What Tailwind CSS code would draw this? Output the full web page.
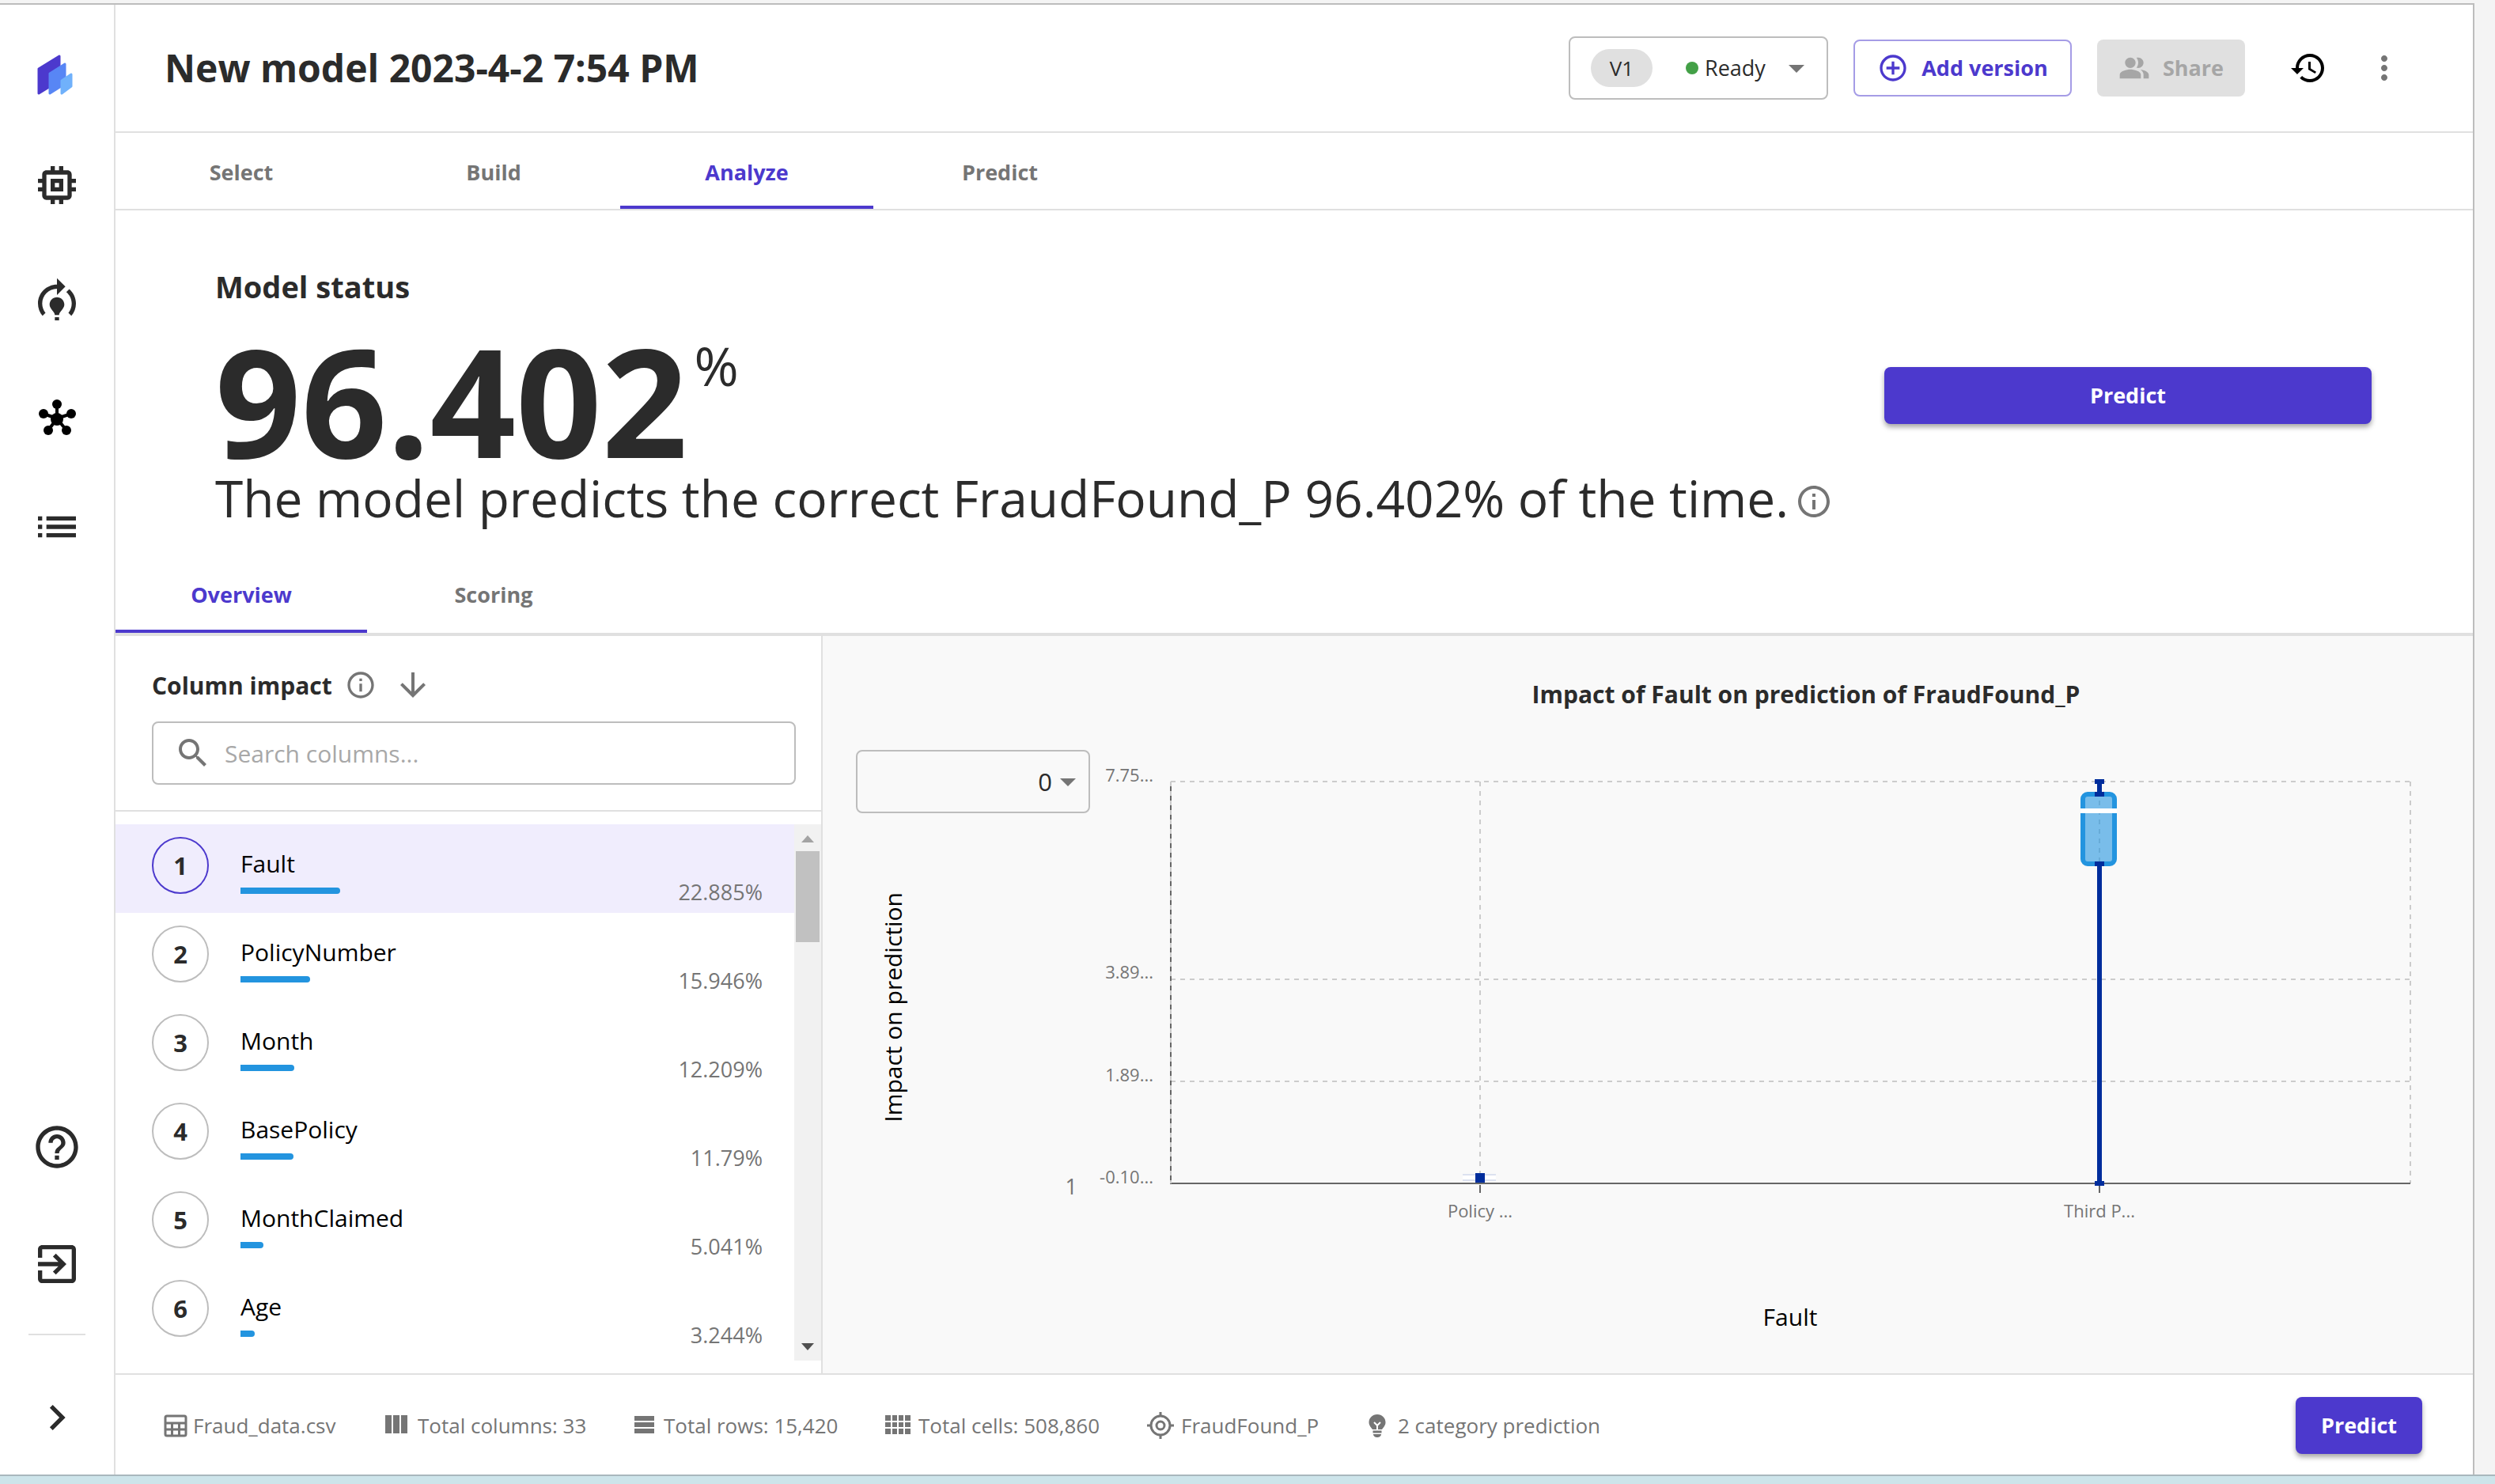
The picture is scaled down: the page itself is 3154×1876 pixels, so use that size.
<!DOCTYPE html>
<html lang="en">
<head>
  <meta charset="UTF-8" />
  <meta name="viewport" content="width=device-width, initial-scale=1.0" />
  <title>New model 2023-4-2 7:54 PM</title>
  <script src="https://cdn.jsdelivr.net/npm/@tailwindcss/browser@4"></script>
</head>
<body class="h-screen flex flex-col overflow-hidden bg-[#f4f4f4] font-['Open_Sans','Noto_Sans',sans-serif] text-[#2b2b2b]">

  <div class="flex-1 min-h-0 mt-1 mr-[26px] flex bg-white border-t-2 border-r-2 border-[#bdbdbd]">

    <!-- Sidebar -->
    <nav class="w-[146px] shrink-0 flex flex-col items-center border-r-2 border-[#e0e0e0] pt-[56px] pb-10">
      <a href="#" aria-label="Home" class="mb-[76px]">
        <svg class="w-16 h-16" viewBox="0 0 64 64">
          <path fill="#4c39cd" stroke="#4c39cd" stroke-width="3" stroke-linejoin="round" d="M9 25 L35 9 V40 L9 56 Z" />
          <path fill="#5886f5" stroke="#5886f5" stroke-width="3" stroke-linejoin="round" d="M23 31 L42 19 V44 L23 56 Z" />
          <path fill="#70b1fb" stroke="#70b1fb" stroke-width="3" stroke-linejoin="round" d="M38 40 L50 32 V47 L38 56 Z" />
        </svg>
      </a>
      <a href="#" aria-label="Models" class="mb-[83px]">
        <svg class="w-16 h-16" viewBox="0 0 24 24" fill="currentColor"><path d="M15 9H9v6h6V9zm-2 4h-2v-2h2v2zm8-2V9h-2V7c0-1.1-.9-2-2-2h-2V3h-2v2h-2V3H9v2H7c-1.1 0-2 .9-2 2v2H3v2h2v2H3v2h2v2c0 1.1.9 2 2 2h2v2h2v-2h2v2h2v-2h2c1.1 0 2-.9 2-2v-2h2v-2h-2v-2h2zm-4 6H7V7h10v10z" /></svg>
      </a>
      <a href="#" aria-label="Training" class="mb-[84px]">
        <svg class="w-16 h-16" viewBox="0 0 24 24" fill="currentColor"><path d="M15.5 13.5c0 2-2.5 3.5-2.5 5h-2c0-1.5-2.5-3-2.5-5 0-1.93 1.57-3.5 3.5-3.5s3.5 1.57 3.5 3.5zm-2.5 6h-2V21h2v-1.5zm6-6.5c0 1.68-.59 3.21-1.58 4.42l1.42 1.42C20.18 17.27 21 15.23 21 13c0-2.74-1.23-5.19-3.16-6.84l-1.42 1.42C17.99 8.86 19 10.82 19 13zm-3-8l-4-4v3c-4.97 0-9 4.03-9 9 0 2.23.82 4.27 2.16 5.84l1.42-1.42C5.59 16.21 5 14.68 5 13c0-3.86 3.14-7 7-7v3l4-4z" /></svg>
      </a>
      <a href="#" aria-label="Hub" class="mb-[73px] text-black">
        <svg class="w-16 h-16" viewBox="0 0 64 64" fill="currentColor" stroke="currentColor">
          <path stroke-width="4" d="M32 32V15M32 32L15 26M32 32L50 26M32 32L21 47M32 32L44 47" />
          <g stroke="none">
            <circle cx="32" cy="33" r="8" />
            <circle cx="32" cy="14" r="6" />
            <circle cx="15" cy="26" r="6" />
            <circle cx="50" cy="26" r="6" />
            <circle cx="21" cy="47" r="6" />
            <circle cx="44" cy="47" r="6" />
          </g>
        </svg>
      </a>
      <a href="#" aria-label="List">
        <svg class="w-16 h-16" viewBox="0 0 24 24" fill="currentColor"><path d="M3 13h2v-2H3v2zm0 4h2v-2H3v2zm0-8h2V7H3v2zm4 4h14v-2H7v2zm0 4h14v-2H7v2zM7 7v2h14V7H7z" /></svg>
      </a>
      <a href="#" aria-label="Help" class="mt-auto mb-[84px]">
        <svg class="w-16 h-16" viewBox="0 0 24 24" fill="currentColor"><path d="M11 18h2v-2h-2v2zm1-16C6.48 2 2 6.48 2 12s4.48 10 10 10 10-4.48 10-10S17.52 2 12 2zm0 18c-4.41 0-8-3.59-8-8s3.59-8 8-8 8 3.59 8 8-3.59 8-8 8zm0-14c-2.21 0-4 1.79-4 4h2c0-1.1.9-2 2-2s2 .9 2 2c0 2-3 1.75-3 5h2c0-2.25 3-2.5 3-5 0-2.21-1.79-4-4-4z" /></svg>
      </a>
      <a href="#" aria-label="Sign out" class="mb-14">
        <svg class="w-16 h-16" viewBox="0 0 24 24" fill="currentColor"><path d="M10.09 15.59L11.5 17l5-5-5-5-1.41 1.41L12.67 11H3v2h9.67l-2.58 2.59zM19 3H5c-1.11 0-2 .9-2 2v4h2V5h14v14H5v-4H3v4c0 1.1.89 2 2 2h14c1.1 0 2-.9 2-2V5c0-1.1-.9-2-2-2z" /></svg>
      </a>
      <hr class="w-[72px] border-t-2 border-[#e0e0e0] mb-[72px]" />
      <button type="button" aria-label="Expand menu">
        <svg class="w-16 h-16" viewBox="0 0 24 24" fill="currentColor"><path d="M10 6L8.59 7.41 13.17 12l-4.58 4.59L10 18l6-6z" /></svg>
      </button>
    </nav>

    <main class="flex-1 min-w-0 flex flex-col">

      <!-- Header -->
      <header class="flex items-center justify-between border-b-2 border-[#e0e0e0] pl-[62px] pr-[88px] py-10">
        <h1 class="text-[48px] leading-[64px] font-bold">New model 2023-4-2 7:54 PM</h1>
        <div class="flex items-center gap-8">
          <div class="relative w-[328px] h-20 flex items-center rounded-lg border-2 border-[#bdbdbd] pl-[26px]">
            <span class="w-[78px] h-12 rounded-full bg-[#e0e0e0] flex items-center justify-center text-[26px]">V1</span>
            <span class="w-4 h-4 rounded-full bg-[#43a047] ml-[42px] mr-2"></span>
            <select aria-label="Version status" class="appearance-none flex-1 self-stretch text-[27px] outline-none">
              <option>Ready</option>
            </select>
            <svg class="absolute right-[14px] w-12 h-12 pointer-events-none text-[#757575]" viewBox="0 0 24 24" fill="currentColor"><path d="M7 10l5 5 5-5z" /></svg>
          </div>
          <button type="button" class="w-[276px] h-[72px] flex items-center justify-center gap-4 rounded-lg border-2 border-[#a59ce6] text-[#4c39cd] text-[27px] font-bold">
            <svg class="w-10 h-10" viewBox="0 0 24 24" fill="currentColor"><path d="M13 7h-2v4H7v2h4v4h2v-4h4v-2h-4V7zm-1-5C6.48 2 2 6.48 2 12s4.48 10 10 10 10-4.48 10-10S17.52 2 12 2zm0 18c-4.41 0-8-3.59-8-8s3.59-8 8-8 8 3.59 8 8-3.59 8-8 8z" /></svg>
            Add version
          </button>
          <button type="button" disabled class="w-[187px] h-[72px] flex items-center justify-center gap-4 rounded-lg bg-[#e0e0e0] text-[#a6a6a6] text-[27px] font-bold">
            <svg class="w-10 h-10" viewBox="0 0 24 24" fill="currentColor"><path d="M16.67 13.13C18.04 14.06 19 15.32 19 17v3h4v-3c0-2.18-3.57-3.47-6.33-3.87zM15 12c2.21 0 4-1.79 4-4s-1.79-4-4-4c-.47 0-.91.1-1.33.24C14.5 5.27 15 6.58 15 8s-.5 2.73-1.33 3.76c.42.14.86.24 1.33.24zM9 12c2.21 0 4-1.79 4-4s-1.79-4-4-4-4 1.79-4 4 1.79 4 4 4zm0 1c-2.67 0-8 1.34-8 4v3h16v-3c0-2.66-5.33-4-8-4z" /></svg>
            Share
          </button>
          <button type="button" aria-label="History" class="ml-6 text-black">
            <svg class="w-12 h-12" viewBox="0 0 24 24" fill="currentColor"><path d="M13 3c-4.97 0-9 4.03-9 9H1l3.89 3.89.07.14L9 12H6c0-3.87 3.13-7 7-7s7 3.13 7 7-3.13 7-7 7c-1.93 0-3.68-.79-4.94-2.06l-1.42 1.42C8.27 19.99 10.51 21 13 21c4.97 0 9-4.03 9-9s-4.03-9-9-9zm-1 5v5l4.28 2.54.72-1.21-3.5-2.08V8H12z" /></svg>
          </button>
          <button type="button" aria-label="More" class="ml-4 text-[#757575]">
            <svg class="w-12 h-12" viewBox="0 0 24 24" fill="currentColor"><path d="M12 8c1.1 0 2-.9 2-2s-.9-2-2-2-2 .9-2 2 .9 2 2 2zm0 2c-1.1 0-2 .9-2 2s.9 2 2 2 2-.9 2-2-.9-2-2-2zm0 6c-1.1 0-2 .9-2 2s.9 2 2 2 2-.9 2-2-.9-2-2-2z" /></svg>
          </button>
        </div>
      </header>

      <!-- Steps -->
      <div role="tablist" class="flex border-b-2 border-[#e0e0e0] text-[27px] font-bold text-[#757575]">
        <button type="button" role="tab" class="w-[318px] h-24 border-b-4 border-transparent pt-2">Select</button>
        <button type="button" role="tab" class="w-80 h-24 border-b-4 border-transparent pt-2">Build</button>
        <button type="button" role="tab" aria-selected="true" class="w-80 h-24 border-b-4 border-[#4c39cd] text-[#4c39cd] pt-2">Analyze</button>
        <button type="button" role="tab" class="w-80 h-24 border-b-4 border-transparent pt-2">Predict</button>
      </div>

      <!-- Model status -->
      <section class="flex items-start justify-between pl-[126px] pr-32 pt-[70px]">
        <div>
          <h2 class="text-[38px] leading-[52px] font-bold">Model status</h2>
          <div class="flex items-start gap-2 mt-[34px]">
            <span class="text-[190px] leading-[168px] font-bold">96.402</span>
            <span class="text-[68px] leading-[80px]">%</span>
          </div>
          <p class="flex items-center gap-2 text-[64px] leading-[80px]">
            The model predicts the correct FraudFound_P 96.402% of the time.
            <svg class="w-12 h-12 mt-2 text-[#757575]" viewBox="0 0 24 24" fill="currentColor"><path d="M11 7h2v2h-2zm0 4h2v6h-2zm1-9C6.48 2 2 6.48 2 12s4.48 10 10 10 10-4.48 10-10S17.52 2 12 2zm0 18c-4.41 0-8-3.59-8-8s3.59-8 8-8 8 3.59 8 8-3.59 8-8 8z" /></svg>
          </p>
        </div>
        <button type="button" class="w-[616px] h-[72px] mt-32 rounded-lg bg-[#4c39cd] text-white text-[27px] font-bold shadow-[0_4px_6px_rgba(0,0,0,0.35)]">Predict</button>
      </section>

      <div role="tablist" class="flex border-b-4 border-[#e0e0e0] mt-[34px] text-[27px] font-bold text-[#757575]">
        <button type="button" role="tab" aria-selected="true" class="w-[318px] h-24 border-b-4 border-[#4c39cd] text-[#4c39cd] pt-1">Overview</button>
        <button type="button" role="tab" class="w-80 h-24 border-b-4 border-transparent pt-1">Scoring</button>
      </div>

      <div class="flex-1 min-h-0 flex">

        <!-- Column impact -->
        <section class="w-[894px] shrink-0 flex flex-col border-r-2 border-[#e0e0e0]">
          <div class="pl-[46px] pr-8 pt-9 pb-8 border-b-2 border-[#e0e0e0]">
            <div class="flex items-center h-[52px]">
              <h3 class="text-[30px] font-bold">Column impact</h3>
              <svg class="w-10 h-10 ml-4 text-[#757575]" viewBox="0 0 24 24" fill="currentColor"><path d="M11 7h2v2h-2zm0 4h2v6h-2zm1-9C6.48 2 2 6.48 2 12s4.48 10 10 10 10-4.48 10-10S17.52 2 12 2zm0 18c-4.41 0-8-3.59-8-8s3.59-8 8-8 8 3.59 8 8-3.59 8-8 8z" /></svg>
              <button type="button" aria-label="Sort" class="ml-[22px] text-[#757575]">
                <svg class="w-12 h-12" viewBox="0 0 24 24" fill="currentColor"><path d="M20 12l-1.41-1.41L13 16.17V4h-2v12.17l-5.58-5.59L4 12l8 8 8-8z" /></svg>
              </button>
            </div>
            <label class="mt-5 h-20 flex items-center gap-4 rounded-lg border-2 border-[#bdbdbd] pl-[26px]">
              <svg class="w-12 h-12 shrink-0 text-[#757575]" viewBox="0 0 24 24" fill="currentColor"><path d="M15.5 14h-.79l-.28-.27C15.41 12.59 16 11.11 16 9.5 16 5.91 13.09 3 9.5 3S3 5.91 3 9.5 5.91 16 9.5 16c1.61 0 3.09-.59 4.23-1.57l.27.28v.79l5 4.99L20.49 19l-4.99-5zm-6 0C7.01 14 5 11.99 5 9.5S7.01 5 9.5 5 14 7.01 14 9.5 11.99 14 9.5 14z" /></svg>
              <input type="text" placeholder="Search columns..." aria-label="Search columns" class="flex-1 min-w-0 text-[30px] outline-none placeholder:text-[#a8a8a8]" />
            </label>
          </div>

          <div class="flex-1 min-h-0 my-4 flex">
            <ol id="columnList" class="flex-1 overflow-hidden"></ol>
            <div class="w-[34px] flex flex-col items-center bg-[#f1f1f1]">
              <svg class="w-[34px] h-[34px]" viewBox="0 0 34 34"><path fill="#a3a3a3" d="M9 23l8-9 8 9z" /></svg>
              <div class="w-[30px] h-[115px] bg-[#c1c1c1]"></div>
              <svg class="w-[34px] h-[34px] mt-auto" viewBox="0 0 34 34"><path fill="#505050" d="M9 12l8 9 8-9z" /></svg>
            </div>
          </div>
        </section>

        <!-- Impact chart -->
        <section class="flex-1 min-w-0 flex bg-[#f9f9f9]">
          <div class="w-[296px] shrink-0 ml-[42px] mt-36">
            <div class="relative h-20 flex items-center rounded-lg border-2 border-[#bdbdbd]">
              <select aria-label="Prediction value" class="appearance-none w-full h-full pr-[46px] text-[31px] text-right [text-align-last:right] outline-none">
                <option>0</option>
                <option>1</option>
              </select>
              <svg class="absolute right-0.5 w-12 h-12 pointer-events-none text-[#757575]" viewBox="0 0 24 24" fill="currentColor"><path d="M7 10l5 5 5-5z" /></svg>
            </div>
            <div class="flex justify-between h-[490px] pl-6 pr-4">
              <span class="self-center rotate-180 [writing-mode:vertical-rl] text-[30px] text-black">Impact on prediction</span>
              <span class="self-end text-[27px] leading-9 text-[#757575]">1</span>
            </div>
          </div>

          <div class="flex-1 min-w-0 flex flex-col">
            <h3 class="pl-[62px] pt-12 text-center text-[30px] leading-[52px] font-bold">Impact of Fault on prediction of FraudFound_P</h3>
            <svg class="w-full" viewBox="0 0 1748 800" role="img" aria-label="Impact of Fault on prediction of FraudFound_P">
              <!-- grid -->
              <g stroke="#cccccc" stroke-width="2" stroke-dasharray="6 6" fill="none">
                <path d="M102 84H1669M102 334H1669M102 463H1669M493 84V592M1276 84V592M1669 84V592" />
              </g>
              <path stroke="#666666" stroke-width="2" d="M101 592H1669M493 594V604M1276 594V604" />
              <path stroke="#cccccc" stroke-width="2" d="M102 84V592" />
              <path stroke="#666666" stroke-width="2" stroke-dasharray="6 6" d="M102 90V592" />
              <!-- axis labels -->
              <g fill="#757575" font-size="22" text-anchor="end">
                <text x="80" y="84">7.75...</text>
                <text x="80" y="333">3.89...</text>
                <text x="80" y="463">1.89...</text>
                <text x="80" y="592">-0.10...</text>
              </g>
              <g fill="#757575" font-size="22" text-anchor="middle">
                <text x="493" y="635">Policy ...</text>
                <text x="1276" y="635">Third P...</text>
              </g>
              <text x="885" y="772" font-size="30" text-anchor="middle" fill="#000000">Fault</text>
              <!-- Policy holder -->
              <path fill="#ffffff" d="M471 580h42v10h-42z" />
              <path stroke="#b9c4e0" stroke-width="1" d="M471 581H513M471 588H513" />
              <path fill="#002d9c" d="M487 579h12v12h-12z" />
              <!-- Third party -->
              <rect x="1255" y="100" width="40" height="88" rx="6" fill="#2394df" fill-opacity="0.6" stroke="#2394df" stroke-width="6" />
              <path fill="#ffffff" d="M1252 118h46v6h-46z" />
              <path stroke="#002d9c" stroke-width="6" d="M1276 84V100M1276 188V592" />
              <path stroke="#002d9c" stroke-width="6" d="M1270 84H1282M1270 100H1282M1270 188H1282M1270 592H1282" />
            </svg>
          </div>
        </section>
      </div>

      <!-- Footer -->
      <footer class="flex items-center justify-between border-t-2 border-[#e0e0e0] pl-[58px] pr-16 pt-7 pb-[26px]">
        <ul class="flex items-center text-[26px] text-[#757575]">
          <li class="w-[280px] flex items-center gap-1">
            <svg class="w-9 h-9" viewBox="0 0 36 36"><path fill="none" stroke="currentColor" stroke-width="3" d="M7 6h22q2 0 2 2v21q0 2-2 2H7q-2 0-2-2V8q0-2 2-2zM5 15h26M5 23h26M13.500 15v16M22.500 15v16" /></svg>
            Fraud_data.csv
          </li>
          <li class="w-[315px] flex items-center gap-2">
            <svg class="w-9 h-9" viewBox="0 0 36 36" fill="currentColor"><path d="M3 5h8v23H3zM13 5h8v23h-8zM23 5h8v23h-8z" /></svg>
            Total columns: 33
          </li>
          <li class="w-[318px] flex items-center gap-2">
            <svg class="w-8 h-9" viewBox="0 0 32 36" fill="currentColor"><path d="M3 6h25v6H3zM3 14h25v6H3zM3 22h25v6H3z" /></svg>
            Total rows: 15,420
          </li>
          <li class="w-[332px] flex items-center gap-2">
            <svg class="w-9 h-9" viewBox="0 0 36 36" fill="currentColor"><path d="M2 5h7v7H2zM11 5h6v7h-6zM19 5h6v7h-6zM27 5h7v7h-7zM2 14h7v6H2zM11 14h6v6h-6zM19 14h6v6h-6zM27 14h7v6h-7zM2 22h7v7H2zM11 22h6v7h-6zM19 22h6v7h-6zM27 22h7v7h-7z" /></svg>
            Total cells: 508,860
          </li>
          <li class="w-[274px] flex items-center gap-2">
            <svg class="w-9 h-9" viewBox="0 0 36 36" fill="none" stroke="currentColor" stroke-width="3"><circle cx="18" cy="18" r="12" /><circle cx="18" cy="18" r="5" /><path d="M18 1v6M18 29v6M1 18h6M29 18h6" /></svg>
            FraudFound_P
          </li>
          <li class="flex items-center gap-2">
            <svg class="w-9 h-9" viewBox="0 0 36 36"><path fill="currentColor" d="M18 4c-6 0-10.500 4.500-10.500 10 0 4 2.500 6 4.500 9h12c2-3 4.500-5 4.500-9C28.500 8.500 24 4 18 4zM12.500 24.500h11v3h-11zM13 29h10c0 2.500-2.500 4-5 4s-5-1.500-5-4z" /><path fill="none" stroke="#ffffff" stroke-width="2" d="M14 14l4 4 4-4M18 18v5" /></svg>
            2 category prediction
          </li>
        </ul>
        <button type="button" class="w-40 h-[72px] rounded-lg bg-[#4c39cd] text-white text-[27px] font-bold shadow-[0_4px_6px_rgba(0,0,0,0.35)]">Predict</button>
      </footer>
    </main>
  </div>

  <!-- Bottom strip -->
  <div class="h-3 shrink-0 border-t-2 border-[#a9b8bd] bg-[#cde4ea]"></div>

  <script>
    const columns = [
      { name: "Fault", impact: "22.885%", bar: 126 },
      { name: "PolicyNumber", impact: "15.946%", bar: 88 },
      { name: "Month", impact: "12.209%", bar: 68 },
      { name: "BasePolicy", impact: "11.79%", bar: 67 },
      { name: "MonthClaimed", impact: "5.041%", bar: 29 },
      { name: "Age", impact: "3.244%", bar: 18 },
    ];

    document.getElementById("columnList").innerHTML = columns.map((col, i) => `
      <li class="${i === 0 ? "bg-[#f0edfd]" : ""}">
        <button type="button" class="w-full h-28 flex items-start text-left pl-[46px] pr-10">
          <span class="w-[72px] h-[72px] mt-4 mr-10 flex items-center justify-center rounded-full border-2 text-[31px] font-bold ${i === 0 ? "border-[#4c39cd]" : "border-[#bdbdbd]"}">${i + 1}</span>
          <span class="flex-1 mt-[30px]">
            <span class="block text-[30px] leading-10 text-black">${col.name}</span>
            <span class="block h-2 mt-[10px] rounded-r bg-[#2394df]" style="width: ${col.bar}px"></span>
          </span>
          <span class="self-end mb-2 text-[27px] leading-9 text-[#757575]">${col.impact}</span>
        </button>
      </li>`).join("");
  </script>
</body>
</html>
